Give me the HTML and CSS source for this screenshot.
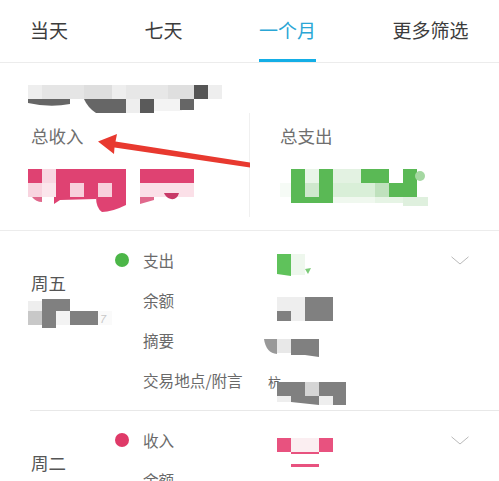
FILE: index.html
```html
<!DOCTYPE html>
<html lang="zh-CN">
<head>
<meta charset="utf-8">
<title>账单明细</title>
<link rel="stylesheet" href="styles.css">
</head>
<body>
<div class="page">
  <nav class="tabs">
    <div class="tab">当天</div>
    <div class="tab">七天</div>
    <div class="tab tab-active">一个月</div>
    <div class="tab">更多筛选</div>
  </nav>

  <section class="summary">
    <svg class="mosaic" width="194" height="28" viewBox="28 85 194 28">
      <rect x="28" y="85" width="14" height="14" fill="#eeeeee"/>
      <rect x="42" y="85" width="42" height="14" fill="#e5e5e5"/>
      <rect x="84" y="85" width="28" height="14" fill="#dedede"/>
      <rect x="112" y="85" width="14" height="14" fill="#eeeeee"/>
      <rect x="126" y="85" width="42" height="14" fill="#e7e7e7"/>
      <rect x="168" y="85" width="26" height="14" fill="#dfdfdf"/>
      <rect x="194" y="85" width="14" height="14" fill="#555555"/>
      <rect x="208" y="85" width="14" height="14" fill="#eeeeee"/>
      <path d="M28 99H70V104Q50 108 28 103Z" fill="#666666"/>
      <path d="M84 99H126V113H96Q88 108 84 99Z" fill="#666666"/>
      <rect x="126" y="99" width="14" height="14" fill="#eeeeee"/>
      <rect x="140" y="99" width="14" height="14" fill="#5a5a5a"/>
      <rect x="154" y="99" width="28" height="12" fill="#f3f3f3"/>
      <rect x="180" y="99" width="14" height="11" fill="#666666"/>
    </svg>
    <div class="totals">
      <div class="total total-in">
        <div class="total-label">总收入</div>
        <svg class="mosaic" width="170" height="44" viewBox="28 169 170 44">
          <rect x="28" y="169" width="14" height="14" fill="#df4272"/>
          <rect x="42" y="169" width="14" height="14" fill="#f8d8e2"/>
          <rect x="56" y="169" width="70" height="14" fill="#df4272"/>
          <rect x="140" y="169" width="54" height="14" fill="#df4272"/>
          <rect x="28" y="183" width="14" height="14" fill="#f8d4df"/>
          <rect x="42" y="183" width="14" height="14" fill="#fbe6ec"/>
          <rect x="56" y="183" width="14" height="14" fill="#df4272"/>
          <rect x="70" y="183" width="14" height="14" fill="#f8d0dc"/>
          <rect x="84" y="183" width="14" height="14" fill="#df4272"/>
          <rect x="98" y="183" width="14" height="14" fill="#f8d0dc"/>
          <rect x="112" y="183" width="14" height="14" fill="#df4272"/>
          <rect x="140" y="183" width="54" height="14" fill="#fbe0e8"/>
          <path d="M32 197H42V202Q36 202 32 197Z" fill="#e0688c"/>
          <path d="M54 197H96V199L60 200 54 204Z" fill="#df4272"/>
          <path d="M96 197H126V205Q112 212 102 212 96 208 96 197Z" fill="#df4272"/>
          <path d="M140 197H154V200L140 204Z" fill="#e0688c"/>
          <path d="M164 193H179Q177 200 171 199 166 198 164 193Z" fill="#c83a68"/>
        </svg>
      </div>
      <div class="total">
        <div class="total-label">总支出</div>
        <svg class="mosaic" width="150" height="44" viewBox="280 169 150 44">
          <rect x="280" y="183" width="11" height="14" fill="#f6fbf6"/>
          <rect x="291" y="169" width="14" height="34" fill="#5ab955"/>
          <rect x="305" y="169" width="14" height="14" fill="#e9f5e8"/>
          <rect x="305" y="183" width="14" height="14" fill="#cfe8cd"/>
          <rect x="305" y="197" width="14" height="6" fill="#5ab955"/>
          <rect x="319" y="169" width="14" height="34" fill="#5ab955"/>
          <rect x="333" y="169" width="28" height="14" fill="#e3f2e2"/>
          <rect x="333" y="183" width="42" height="14" fill="#d9efd8"/>
          <rect x="333" y="197" width="42" height="6" fill="#f0f8ef"/>
          <rect x="361" y="169" width="28" height="14" fill="#5ab955"/>
          <rect x="375" y="183" width="14" height="14" fill="#bfe1bd"/>
          <rect x="389" y="183" width="28" height="14" fill="#5ab955"/>
          <rect x="403" y="169" width="14" height="14" fill="#5ab955"/>
          <circle cx="420" cy="176" r="5" fill="#a5d8a2"/>
          <rect x="375" y="197" width="28" height="6" fill="#e6f4e5"/>
          <rect x="403" y="197" width="25" height="9" fill="#dff0de"/>
        </svg>
      </div>
    </div>
  </section>

  <article class="entry">
    <div class="day">
      <div class="day-name">周五</div>
      <svg class="mosaic" width="84" height="30" viewBox="28 299 84 30">
        <rect x="28" y="301" width="14" height="10" fill="#eeeeee"/>
        <rect x="42" y="299" width="28" height="12" fill="#808080"/>
        <rect x="28" y="311" width="14" height="14" fill="#c8c8c8"/>
        <rect x="42" y="311" width="14" height="17" fill="#808080"/>
        <rect x="56" y="311" width="14" height="14" fill="#f3f3f3"/>
        <rect x="70" y="311" width="28" height="14" fill="#808080"/>
        <rect x="98" y="311" width="14" height="14" fill="#fafafa"/>
        <text x="100" y="323" class="faint">7</text>
      </svg>
    </div>
    <div class="details">
      <span class="dot dot-out"></span><span class="field">支出</span>
      <div class="value">
        <svg class="mosaic" width="100" height="40" viewBox="260 241 100 40">
          <path d="M277 254H291V276L277 274Z" fill="#5fc25b"/>
          <rect x="291" y="254" width="14" height="21" fill="#eef7ed"/>
          <path d="M305 269 311 268 308 274Z" fill="#7ccb78"/>
        </svg>
        <svg class="chevron" width="18" height="9" viewBox="0 0 18 9"><path d="M.5.8 9 8 17.5.8" fill="none" stroke="#b9b9b9"/></svg>
      </div>

      <span></span><span class="field">余额</span>
      <div class="value">
        <svg class="mosaic" width="100" height="40" viewBox="260 281 100 40">
          <rect x="277" y="297" width="28" height="14" fill="#eeeeee"/>
          <rect x="277" y="311" width="14" height="11" fill="#808080"/>
          <rect x="291" y="311" width="14" height="10" fill="#eeeeee"/>
          <rect x="305" y="297" width="28" height="26" fill="#808080"/>
        </svg>
      </div>

      <span></span><span class="field">摘要</span>
      <div class="value">
        <svg class="mosaic" width="100" height="40" viewBox="260 321 100 40">
          <path d="M264 339H277V354Q266 353 264 339Z" fill="#999999"/>
          <rect x="277" y="339" width="14" height="14" fill="#e8e8e8"/>
          <path d="M291 339H319V357L305 355H291Z" fill="#808080"/>
        </svg>
      </div>

      <span></span><span class="field">交易地点/附言</span>
      <div class="value">
        <svg class="mosaic" width="100" height="50" viewBox="260 361 100 50">
          <text x="268" y="387" class="hint">杭</text>
          <rect x="277" y="382" width="28" height="14" fill="#808080"/>
          <rect x="305" y="382" width="14" height="14" fill="#d5d5d5"/>
          <rect x="319" y="382" width="27" height="14" fill="#808080"/>
          <rect x="277" y="396" width="14" height="6" fill="#eeeeee"/>
          <path d="M291 396H319V405L291 402Z" fill="#808080"/>
          <rect x="319" y="396" width="14" height="9" fill="#eeeeee"/>
          <rect x="333" y="396" width="13" height="9" fill="#808080"/>
        </svg>
      </div>
    </div>
  </article>

  <article class="entry entry-next">
    <div class="day">
      <div class="day-name">周二</div>
    </div>
    <div class="details">
      <span class="dot dot-in"></span><span class="field">收入</span>
      <div class="value">
        <svg class="mosaic" width="100" height="40" viewBox="260 421 100 40">
          <rect x="277" y="438" width="14" height="14" fill="#e8527f"/>
          <rect x="291" y="438" width="28" height="14" fill="#fbeef1"/>
          <rect x="291" y="452" width="28" height="2" fill="#e8527f"/>
          <rect x="319" y="438" width="14" height="14" fill="#e8527f"/>
        </svg>
        <svg class="chevron" width="18" height="9" viewBox="0 0 18 9"><path d="M.5.8 9 8 17.5.8" fill="none" stroke="#b9b9b9"/></svg>
      </div>
      <span></span><span class="field">余额</span>
      <div class="value">
        <svg class="mosaic" width="100" height="40" viewBox="260 461 100 40">
          <rect x="291" y="464" width="28" height="3" fill="#e8527f"/>
        </svg>
      </div>
    </div>
  </article>

  <svg class="arrow" width="499" height="481" viewBox="0 0 499 481">
    <path d="M98 141.5 117 134 115.5 141.5 250 162.5V167.5L114.5 147.5 114 154Z" fill="#e8392f"/>
  </svg>
</div>
</body>
</html>
```

FILE: styles.css
```css
* { box-sizing: border-box; }
html, body { margin: 0; padding: 0; background: #fff; }
body { font-family: "Noto Sans CJK SC", "Liberation Sans", sans-serif; }

.page {
  position: relative;
  width: 499px;
  height: 481px;
  overflow: hidden;
  color: #3c3c3c;
}

.tabs {
  display: flex;
  gap: 76.5px;
  height: 63px;
  padding-left: 30px;
  border-bottom: 1px solid #ececec;
}
.tab {
  height: 62px;
  padding-top: 3px;
  border-bottom: 3px solid transparent;
  font-size: 19px;
  line-height: 54px;
  white-space: nowrap;
}
.tab-active {
  color: #2aa6d5;
  border-bottom-color: #14aee6;
}

.mosaic { display: block; }

.summary {
  height: 168px;
  padding: 22px 0 0 28px;
  border-bottom: 1px solid #ececec;
}
.totals {
  display: flex;
  height: 104px;
  margin-left: -28px;
}
.total {
  flex: 1;
  padding: 12px 0 0 30px;
}
.total-in {
  flex: 0 0 250px;
  padding-left: 28px;
  border-right: 1px solid #f0f0f0;
}
.total-label {
  height: 24px;
  margin-bottom: 20px;
  font-size: 17.5px;
  line-height: 22px;
  color: #6f6f6f;
}
.total-in .total-label { padding-left: 3px; }

.entry {
  display: flex;
  height: 179px;
  padding-top: 10px;
  padding-left: 28px;
}
.entry-next {
  position: relative;
  padding-top: 11px;
}
.entry-next::before {
  content: "";
  position: absolute;
  top: 0;
  left: 30px;
  right: 0;
  border-top: 1px solid #e8e8e8;
}
.day { width: 87px; padding-top: 30px; }
.day-name {
  height: 24px;
  margin-bottom: 4px;
  padding-left: 3px;
  font-size: 17.5px;
  line-height: 24px;
  color: #555;
}

.details {
  flex: 1;
  display: grid;
  grid-template-columns: 28px 117px 1fr;
  grid-auto-rows: 40px;
}
.dot {
  width: 14px;
  height: 14px;
  margin-top: 12px;
  border-radius: 50%;
}
.dot-out { background: #4cb648; }
.dot-in { background: #df3a68; }
.field {
  font-size: 15.6px;
  line-height: 38px;
  color: #6a6a6a;
  white-space: nowrap;
}
.value {
  display: flex;
  justify-content: space-between;
  padding-right: 30px;
}
.chevron { margin-top: 15px; }
.hint { font-size: 13px; fill: #666; }
.faint { font-size: 11px; font-style: italic; fill: #c8c8c8; font-family: "Liberation Sans", sans-serif; }

.arrow {
  position: absolute;
  top: 0;
  left: 0;
  pointer-events: none;
}
```
